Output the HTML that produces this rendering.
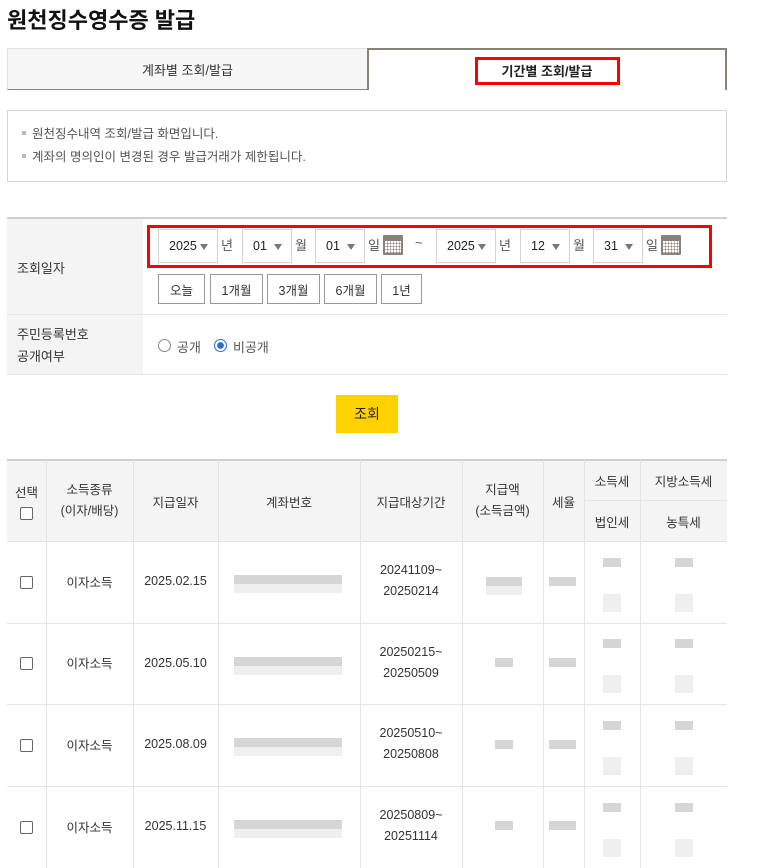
<!DOCTYPE html>
<html><head><meta charset="utf-8"><style>
*{margin:0;padding:0;box-sizing:border-box}
body{width:759px;height:868px;overflow:hidden;background:#fff;font-family:"Liberation Sans","Noto Sans CJK KR",sans-serif;color:#333;font-size:13px;position:relative}
.a{position:absolute}
.c{display:flex;align-items:center;justify-content:center;text-align:center}
.sel{position:absolute;top:229px;height:34px;border:1px solid #d4d4d4;background:#fff;font-size:12.5px;color:#222;padding-left:10px;line-height:32px}
.sel:after{content:"";position:absolute;right:9px;top:14px;border-left:4px solid transparent;border-right:4px solid transparent;border-top:6px solid #777}
.lbl{position:absolute;top:235px;font-size:13px;color:#555}
.btn{position:absolute;top:274px;height:30px;border:1px solid #999;background:#fff;font-size:12.5px;color:#333;display:flex;align-items:center;justify-content:center}
.cal{position:absolute;top:235px;width:20px;height:20px;background:#8a8178;border-radius:1px}
.cal:before{content:"";position:absolute;left:2px;top:6px;width:16px;height:12px;background:#fff;background-image:radial-gradient(#8a8178 45%,transparent 50%);background-size:3px 3px;background-position:1px 1px}
.v{position:absolute;top:460px;height:408px;width:1px;background:#e4e4e4}
.h{position:absolute;left:7px;width:720px;height:1px;background:#e4e4e4}
.cb{width:13px;height:13px;border:1px solid #666;border-radius:2px;display:inline-block;background:#fff}
.g{position:absolute;background:#d6d6d6}
.gl{position:absolute;background:#efefef}
.bul{display:inline-block;width:4px;height:4px;background:#bbb;margin:0 6px 3px 0;vertical-align:middle}
</style></head><body>
<div class="a" style="left:7px;top:3px;font-size:22px;font-weight:bold;color:#111">원천징수영수증 발급</div>

<div class="a c" style="left:7px;top:48px;width:361px;height:42px;background:#f7f7f7;border:1px solid #e2e2e2;border-bottom:1px solid #8a8178;font-size:13px">계좌별 조회/발급</div>
<div class="a c" style="left:367px;top:48px;width:360px;height:42px;background:#fff;border:2px solid #8a8178;border-bottom:none;font-size:13px;font-weight:bold;color:#222">기간별 조회/발급</div>
<div class="a" style="left:475px;top:57px;width:145px;height:28px;border:3px solid #f00"></div>

<div class="a" style="left:7px;top:110px;width:720px;height:72px;border:1px solid #d4d4d4;font-size:12.5px;color:#555;line-height:23px;padding:12px 0 0 14px">
<div><span class="bul"></span>원천징수내역 조회/발급 화면입니다.</div>
<div><span class="bul"></span>계좌의 명의인이 변경된 경우 발급거래가 제한됩니다.</div>
</div>

<div class="a" style="left:7px;top:217px;width:720px;height:2px;background:#cfcfcf"></div>
<div class="a" style="left:7px;top:219px;width:136px;height:155px;background:#f4f4f4"></div>
<div class="a" style="left:7px;top:314px;width:720px;height:1px;background:#e6e6e6"></div>
<div class="a" style="left:7px;top:374px;width:720px;height:1px;background:#e6e6e6"></div>
<div class="a" style="left:17px;top:258px;font-size:13px">조회일자</div>
<div class="a" style="left:17px;top:324px;font-size:13px;line-height:22px">주민등록번호<br>공개여부</div>

<div class="sel" style="left:158px;width:60px">2025</div><div class="lbl" style="left:221px">년</div>
<div class="sel" style="left:242px;width:50px">01</div><div class="lbl" style="left:295px">월</div>
<div class="sel" style="left:315px;width:50px">01</div><div class="lbl" style="left:368px">일</div>
<div class="cal" style="left:383px"></div>
<div class="lbl" style="left:415px">~</div>
<div class="sel" style="left:436px;width:60px">2025</div><div class="lbl" style="left:499px">년</div>
<div class="sel" style="left:520px;width:50px">12</div><div class="lbl" style="left:573px">월</div>
<div class="sel" style="left:593px;width:50px">31</div><div class="lbl" style="left:646px">일</div>
<div class="cal" style="left:661px"></div>
<div class="a" style="left:147px;top:225px;width:565px;height:43px;border:3px solid #f00"></div>

<div class="btn" style="left:158px;width:47px">오늘</div>
<div class="btn" style="left:210px;width:53px">1개월</div>
<div class="btn" style="left:267px;width:53px">3개월</div>
<div class="btn" style="left:324px;width:53px">6개월</div>
<div class="btn" style="left:381px;width:41px">1년</div>

<div class="a" style="left:158px;top:339px;width:13px;height:13px;border:1px solid #888;border-radius:50%"></div>
<div class="a" style="left:177px;top:337px;font-size:13px;color:#555">공개</div>
<div class="a" style="left:214px;top:339px;width:13px;height:13px;border:1px solid #2a6fc9;border-radius:50%;background:radial-gradient(#2a6fc9 40%,#fff 46%)"></div>
<div class="a" style="left:233px;top:337px;font-size:13px;color:#555">비공개</div>

<div class="a c" style="left:336px;top:395px;width:62px;height:38px;background:#ffd200;font-size:14px;color:#222">조회</div>

<div class="a" style="left:7px;top:459px;width:720px;height:2px;background:#cfcfcf"></div>
<div class="a" style="left:7px;top:461px;width:720px;height:80px;background:#f4f4f4"></div>
<div class="h" style="top:541px"></div>
<div class="h" style="top:623px"></div>
<div class="h" style="top:704px"></div>
<div class="h" style="top:786px"></div>
<div class="a" style="left:584px;top:500px;width:143px;height:1px;background:#e4e4e4"></div>
<div class="v" style="left:46px"></div><div class="v" style="left:133px"></div><div class="v" style="left:218px"></div><div class="v" style="left:360px"></div><div class="v" style="left:462px"></div><div class="v" style="left:543px"></div><div class="v" style="left:584px"></div><div class="v" style="left:640px"></div>

<div class="a c" style="left:7px;top:461px;width:39px;height:80px;flex-direction:column;font-size:12.5px">선택<span class="cb" style="margin-top:6px"></span></div>
<div class="a c" style="left:46px;top:461px;width:87px;height:80px;font-size:12.5px;line-height:21px">소득종류<br>(이자/배당)</div>
<div class="a c" style="left:133px;top:461px;width:85px;height:80px;font-size:12.5px">지급일자</div>
<div class="a c" style="left:218px;top:461px;width:142px;height:80px;font-size:12.5px">계좌번호</div>
<div class="a c" style="left:360px;top:461px;width:102px;height:80px;font-size:12.5px">지급대상기간</div>
<div class="a c" style="left:462px;top:461px;width:81px;height:80px;font-size:12.5px;line-height:21px">지급액<br>(소득금액)</div>
<div class="a c" style="left:543px;top:461px;width:41px;height:80px;font-size:12.5px">세율</div>
<div class="a c" style="left:584px;top:461px;width:56px;height:39px;font-size:12.5px">소득세</div>
<div class="a c" style="left:640px;top:461px;width:87px;height:39px;font-size:12.5px">지방소득세</div>
<div class="a c" style="left:584px;top:501px;width:56px;height:40px;font-size:12.5px">법인세</div>
<div class="a c" style="left:640px;top:501px;width:87px;height:40px;font-size:12.5px">농특세</div>

<div class="a c" style="left:7px;top:541px;width:39px;height:82px"><span class="cb"></span></div>
<div class="a c" style="left:46px;top:541px;width:87px;height:80px;font-size:12.5px">이자소득</div>
<div class="a c" style="left:133px;top:541px;width:85px;height:80px;font-size:12.5px">2025.02.15</div>
<div class="a c" style="left:360px;top:541px;width:102px;height:80px;font-size:12.5px;line-height:21px">20241109~<br>20250214</div>

<div class="a c" style="left:7px;top:623px;width:39px;height:81px"><span class="cb"></span></div>
<div class="a c" style="left:46px;top:623px;width:87px;height:79px;font-size:12.5px">이자소득</div>
<div class="a c" style="left:133px;top:623px;width:85px;height:79px;font-size:12.5px">2025.05.10</div>
<div class="a c" style="left:360px;top:623px;width:102px;height:79px;font-size:12.5px;line-height:21px">20250215~<br>20250509</div>

<div class="a c" style="left:7px;top:704px;width:39px;height:82px"><span class="cb"></span></div>
<div class="a c" style="left:46px;top:704px;width:87px;height:80px;font-size:12.5px">이자소득</div>
<div class="a c" style="left:133px;top:704px;width:85px;height:80px;font-size:12.5px">2025.08.09</div>
<div class="a c" style="left:360px;top:704px;width:102px;height:80px;font-size:12.5px;line-height:21px">20250510~<br>20250808</div>

<div class="a c" style="left:7px;top:786px;width:39px;height:82px"><span class="cb"></span></div>
<div class="a c" style="left:46px;top:786px;width:87px;height:80px;font-size:12.5px">이자소득</div>
<div class="a c" style="left:133px;top:786px;width:85px;height:80px;font-size:12.5px">2025.11.15</div>
<div class="a c" style="left:360px;top:786px;width:102px;height:80px;font-size:12.5px;line-height:21px">20250809~<br>20251114</div>

<div class="g" style="left:234px;top:575px;width:108px;height:9px"></div><div class="gl" style="left:234px;top:584px;width:108px;height:9px"></div>
<div class="g" style="left:486px;top:577px;width:36px;height:9px"></div><div class="gl" style="left:486px;top:586px;width:36px;height:9px"></div>
<div class="g" style="left:549px;top:577px;width:27px;height:9px"></div>
<div class="g" style="left:603px;top:558px;width:18px;height:9px"></div><div class="gl" style="left:603px;top:594px;width:18px;height:18px"></div>
<div class="g" style="left:675px;top:558px;width:18px;height:9px"></div><div class="gl" style="left:675px;top:594px;width:18px;height:18px"></div>

<div class="g" style="left:234px;top:657px;width:108px;height:9px"></div><div class="gl" style="left:234px;top:666px;width:108px;height:9px"></div>
<div class="g" style="left:495px;top:658px;width:18px;height:9px"></div>
<div class="g" style="left:549px;top:658px;width:27px;height:9px"></div>
<div class="g" style="left:603px;top:639px;width:18px;height:9px"></div><div class="gl" style="left:603px;top:675px;width:18px;height:18px"></div>
<div class="g" style="left:675px;top:639px;width:18px;height:9px"></div><div class="gl" style="left:675px;top:675px;width:18px;height:18px"></div>

<div class="g" style="left:234px;top:738px;width:108px;height:9px"></div><div class="gl" style="left:234px;top:747px;width:108px;height:9px"></div>
<div class="g" style="left:495px;top:740px;width:18px;height:9px"></div>
<div class="g" style="left:549px;top:740px;width:27px;height:9px"></div>
<div class="g" style="left:603px;top:721px;width:18px;height:9px"></div><div class="gl" style="left:603px;top:757px;width:18px;height:18px"></div>
<div class="g" style="left:675px;top:721px;width:18px;height:9px"></div><div class="gl" style="left:675px;top:757px;width:18px;height:18px"></div>

<div class="g" style="left:234px;top:820px;width:108px;height:9px"></div><div class="gl" style="left:234px;top:829px;width:108px;height:9px"></div>
<div class="g" style="left:495px;top:821px;width:18px;height:9px"></div>
<div class="g" style="left:549px;top:821px;width:27px;height:9px"></div>
<div class="g" style="left:603px;top:803px;width:18px;height:9px"></div><div class="gl" style="left:603px;top:839px;width:18px;height:18px"></div>
<div class="g" style="left:675px;top:803px;width:18px;height:9px"></div><div class="gl" style="left:675px;top:839px;width:18px;height:18px"></div>
</body></html>
